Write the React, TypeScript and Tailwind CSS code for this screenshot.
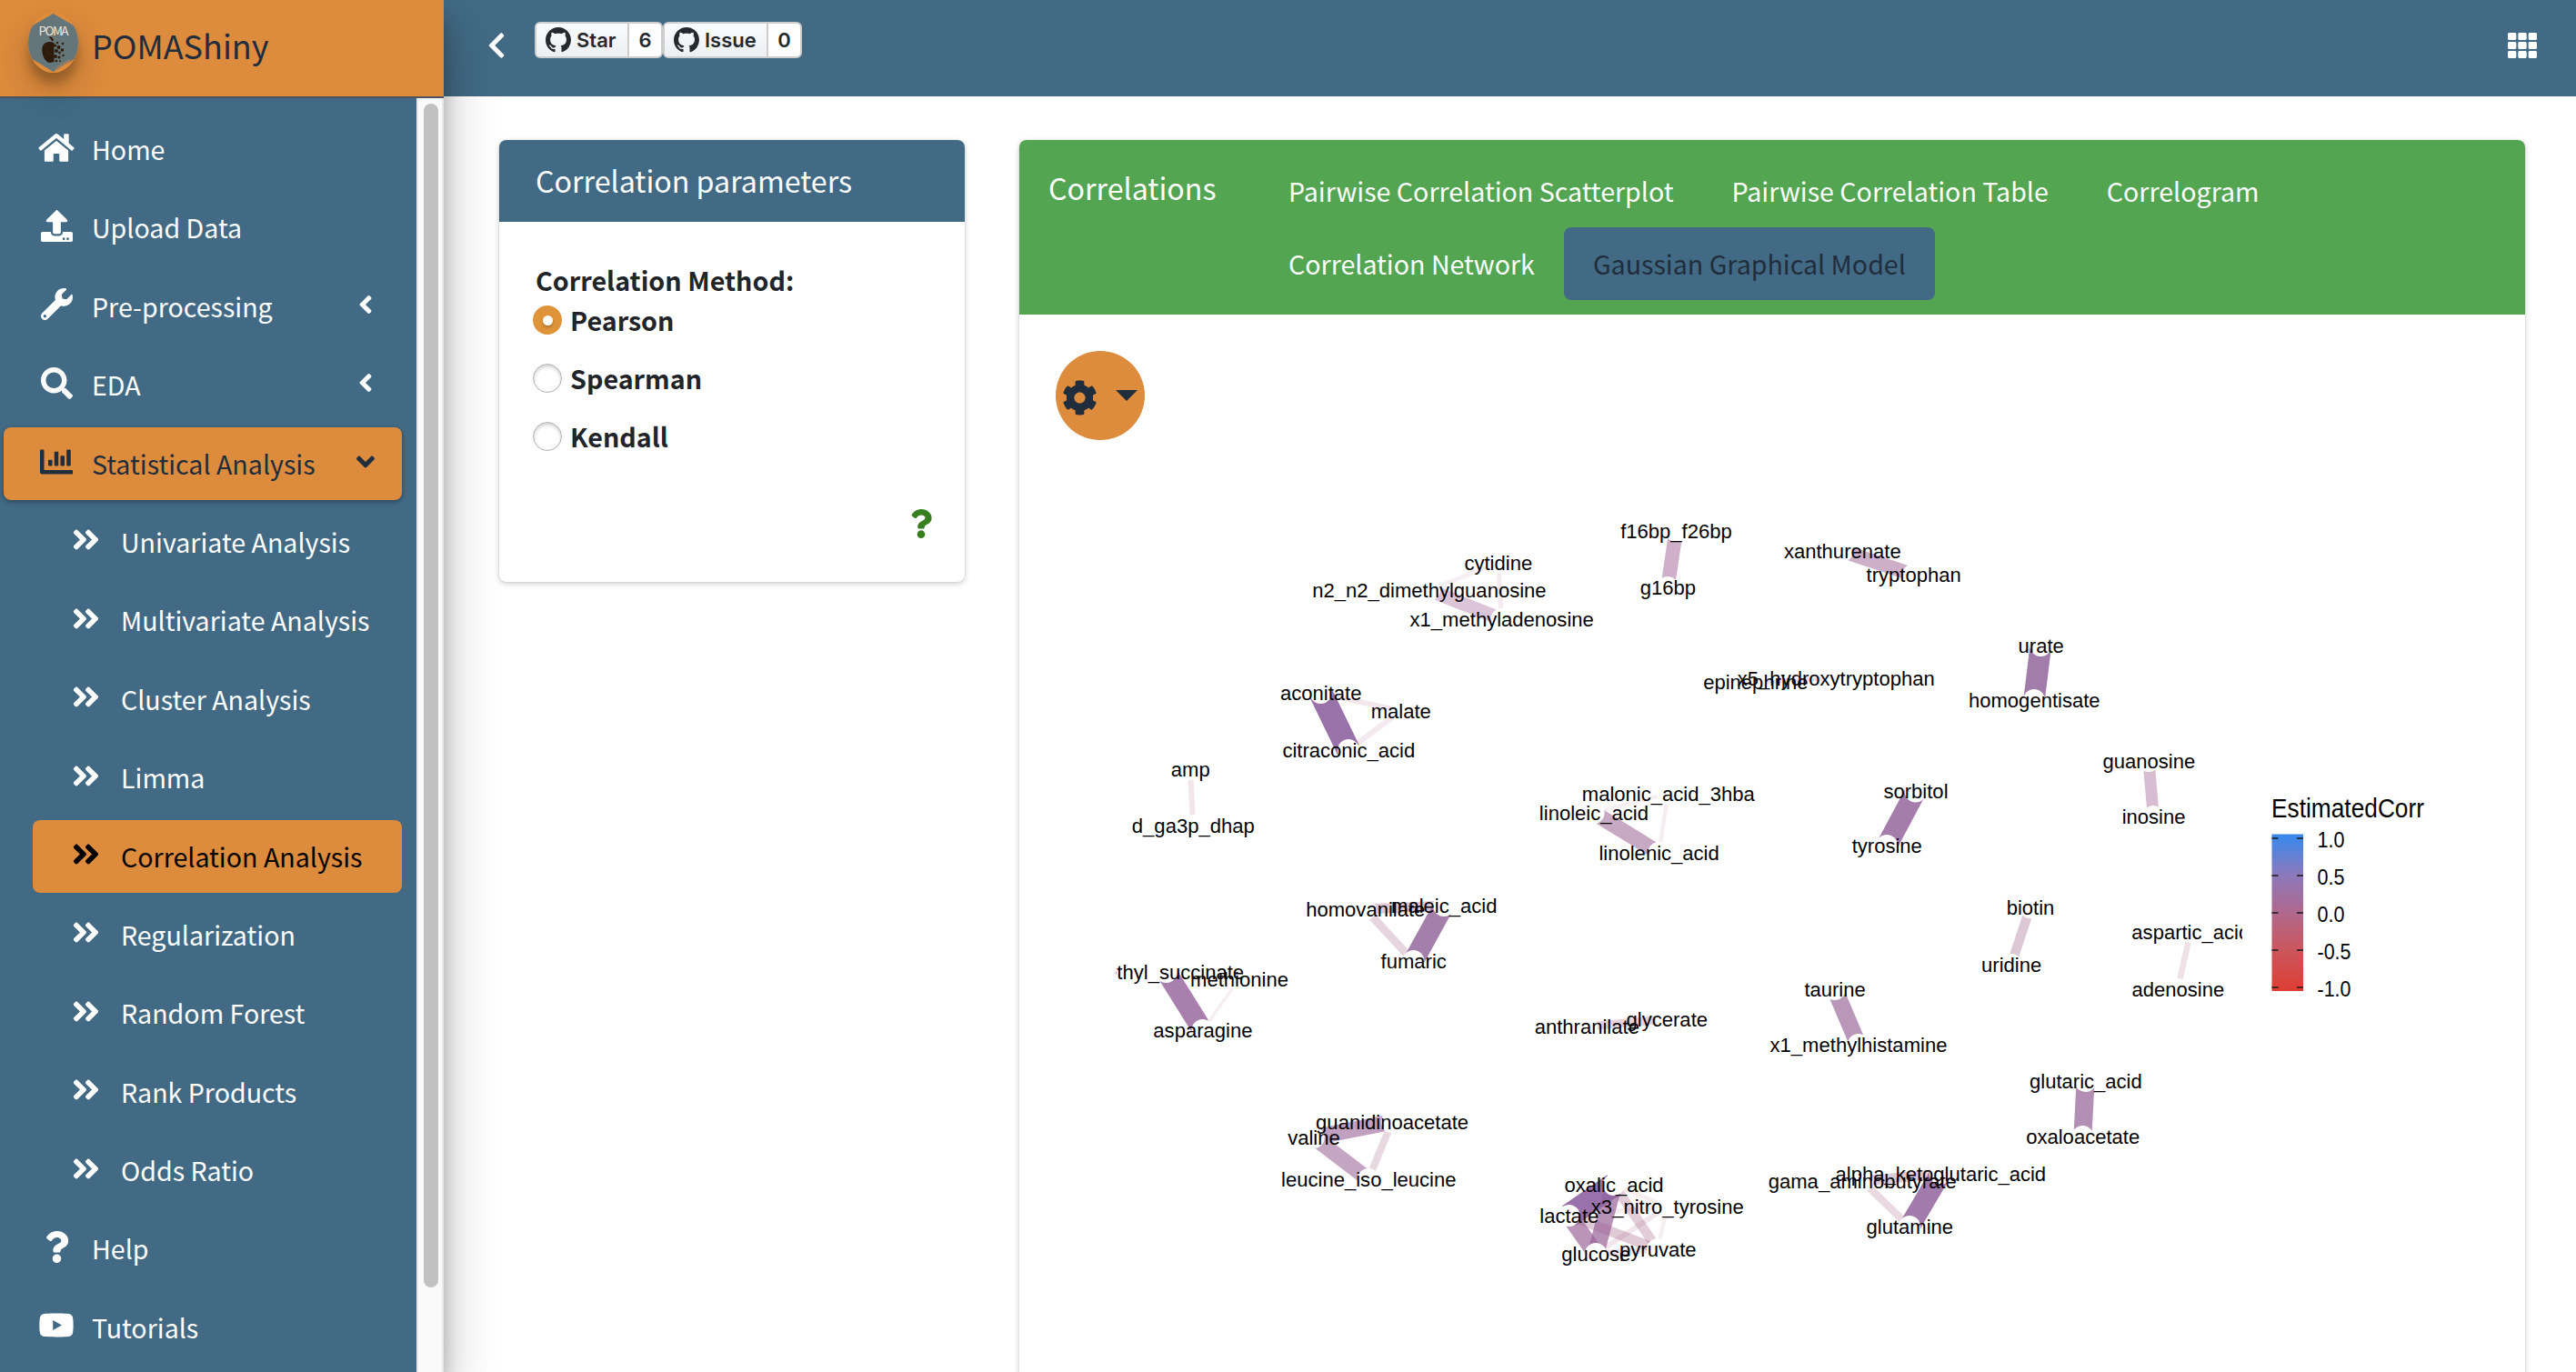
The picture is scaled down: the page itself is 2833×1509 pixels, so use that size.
import React from "react";
import {
  FaAngleDoubleRight,
  FaAngleDown,
  FaAngleLeft,
  FaChartBar,
  FaChevronLeft,
  FaCog,
  FaHome,
  FaQuestion,
  FaSearch,
  FaTh,
  FaUpload,
  FaWrench,
  FaYoutube,
} from "react-icons/fa";

type NavItem = { label: string; icon: React.ReactNode; chevron?: boolean };

const topItems: NavItem[] = [
  { label: "Home", icon: <FaHome className="h-[35px] w-[40px]" /> },
  { label: "Upload Data", icon: <FaUpload className="size-[35px]" /> },
  { label: "Pre-processing", icon: <FaWrench className="size-[35px]" />, chevron: true },
  { label: "EDA", icon: <FaSearch className="size-[35px]" />, chevron: true },
];

const subItems = [
  "Univariate Analysis",
  "Multivariate Analysis",
  "Cluster Analysis",
  "Limma",
  "Correlation Analysis",
  "Regularization",
  "Random Forest",
  "Rank Products",
  "Odds Ratio",
];

const bottomItems: NavItem[] = [
  { label: "Help", icon: <FaQuestion className="size-[35px]" /> },
  { label: "Tutorials", icon: <FaYoutube className="h-[35px] w-[40px]" /> },
];

function NavRow({ item, active = false }: { item: NavItem; active?: boolean }) {
  return (
    <div
      className={
        active
          ? "ml-1 mr-4 flex h-20 shrink-0 items-center rounded-lg bg-[#dd8b3c] pl-8 text-[#1f2d3d] shadow-[0_2px_6px_rgba(0,0,0,0.12),0_2px_4px_rgba(0,0,0,0.24)]"
          : "ml-1 mr-4 flex h-20 shrink-0 items-center pl-8 text-white"
      }
    >
      <span className="flex w-[52px] shrink-0 justify-center pb-1">{item.icon}</span>
      <span className="ml-[13px] grow">{item.label}</span>
      {item.chevron && <FaAngleLeft className="mr-[24px] size-8 -translate-y-[2px]" />}
      {active && <FaAngleDown className="mr-[24px] size-8 -translate-y-[2px]" />}
    </div>
  );
}

function Logo() {
  return (
    <div className="ml-[31px] h-[66px] w-[55px] rounded-[50%] shadow-[0_20px_40px_rgba(0,0,0,0.19),0_12px_12px_rgba(0,0,0,0.23)]">
      <svg viewBox="0 0 55 66" className="block h-[66px] w-[55px] overflow-hidden rounded-[50%]">
        <rect width="55" height="66" fill="#e08c3a" />
        <path d="M27.5 1 L57 18 V47 L27.5 65 L-2 47 V18 Z" fill="#64767a" />
        <path d="M29 63.5 L46 53 M31 60.5 L46 51.5" stroke="#b98250" strokeWidth="1" />
        <text x="28" y="25" textAnchor="middle" textLength="33" fontSize="13.5" fill="#efe3d6" fontFamily="Noto Sans CJK SC">
          POMA
        </text>
        <path
          d="M28.5 33 C24 31 16 31 15.3 40 C15 47 19 55 24 55 C26 55 27 54 28.5 54.5 Z M26 31 C25 29 23.5 28 22.5 26.5 C26 26 28.5 28 27.5 31 Z"
          fill="#2d1c0c"
        />
        <g fill="#2d1c0c">
          <circle cx="29.5" cy="36" r="1.6" />
          <circle cx="32" cy="33" r="1.2" />
          <circle cx="33.5" cy="38" r="2" />
          <circle cx="38" cy="34" r="1.2" />
          <circle cx="37.5" cy="41" r="1.8" />
          <circle cx="31" cy="42" r="2" />
          <circle cx="34.5" cy="44" r="1.4" />
          <circle cx="30" cy="48" r="2" />
          <circle cx="34" cy="49" r="1.6" />
          <circle cx="38.5" cy="47" r="1.2" />
          <circle cx="31" cy="53" r="1.3" />
          <circle cx="35" cy="53" r="0.9" />
        </g>
      </svg>
    </div>
  );
}

function Sidebar() {
  return (
    <aside className="relative z-10 flex h-[1509px] w-[488px] shrink-0 flex-col bg-[#426a84] shadow-[0_28px_56px_rgba(0,0,0,0.25),0_20px_20px_rgba(0,0,0,0.22)]">
      <div className="flex h-[108px] shrink-0 items-center border-b-2 border-[#4b545c] bg-[#dd8b3c] pb-[12px]">
        <Logo />
        <span className="ml-[15px] pt-[3px] text-[36px] leading-[48px] text-[#1f2d3d]">POMAShiny</span>
      </div>
      <div className="flex min-h-0 grow">
        <nav className="flex w-[458px] flex-col gap-[6.4px] overflow-hidden pt-4 text-[28.6px] leading-[48px]">
          {topItems.map((item) => (
            <NavRow key={item.label} item={item} />
          ))}
          <NavRow active item={{ label: "Statistical Analysis", icon: <FaChartBar className="size-[36px]" /> }} />
          {subItems.map((label) => (
            <div
              key={label}
              className={
                label === "Correlation Analysis"
                  ? "ml-9 mr-4 flex h-20 shrink-0 items-center rounded-lg bg-[#dd8b3c] pl-8 text-black"
                  : "ml-9 mr-4 flex h-20 shrink-0 items-center pl-8 text-white"
              }
            >
              <span className="flex w-[53px] shrink-0 justify-center pb-1">
                <FaAngleDoubleRight className="size-[35px]" />
              </span>
              <span className="ml-[12px] whitespace-nowrap">{label}</span>
            </div>
          ))}
          {bottomItems.map((item) => (
            <NavRow key={item.label} item={item} />
          ))}
        </nav>
        <div className="flex w-[30px] justify-center border-x-2 border-[#e8e8e8] bg-[#fafafa] pl-[2px] pt-[6px]">
          <div className="h-[1302px] w-4 rounded-full bg-[#c1c1c1]" />
        </div>
      </div>
    </aside>
  );
}

function GithubMark() {
  return (
    <svg viewBox="0 0 16 16" className="mr-[6px] size-[28px] shrink-0" fill="currentColor">
      <path
        fillRule="evenodd"
        d="M8 0C3.58 0 0 3.58 0 8c0 3.54 2.29 6.53 5.47 7.59.4.07.55-.17.55-.38 0-.19-.01-.82-.01-1.49-2.01.37-2.53-.49-2.69-.94-.09-.23-.48-.94-.82-1.13-.28-.15-.68-.52-.01-.53.63-.01 1.08.58 1.23.82.72 1.21 1.87.87 2.33.66.07-.52.28-.87.51-1.07-1.78-.2-3.64-.89-3.64-3.95 0-.87.31-1.59.82-2.15-.08-.2-.36-1.02.08-2.12 0 0 .67-.21 2.2.82.64-.18 1.32-.27 2-.27.68 0 1.36.09 2 .27 1.53-1.04 2.2-.82 2.2-.82.44 1.1.16 1.92.08 2.12.51.56.82 1.27.82 2.15 0 3.07-1.87 3.75-3.65 3.95.29.25.54.73.54 1.48 0 1.07-.01 1.93-.01 2.2 0 .21.15.46.55.38A8.013 8.013 0 0016 8c0-4.42-3.58-8-8-8z"
      />
    </svg>
  );
}

function GithubButton({ label, count }: { label: string; count: string }) {
  return (
    <div className="flex h-10 overflow-hidden rounded-[6px] border-2 border-[#cdcdcd] bg-white font-['Inter','Liberation_Sans',sans-serif] text-[22px] font-semibold leading-[36px] text-[#24292e]">
      <div className="flex items-center bg-linear-to-b from-[#fafbfc] to-[#eceff3] pl-[10px] pr-[12px]">
        <GithubMark />
        <span className={label === "Star" ? "w-[44px]" : "w-[56px]"}>{label}</span>
      </div>
      <div className="w-[37px] border-l-2 border-[#cdcdcd] text-center">{count}</div>
    </div>
  );
}

function Header() {
  return (
    <header className="flex h-[106px] shrink-0 items-start bg-[#426a84] text-white">
      <FaChevronLeft className="ml-[48px] mt-[34px] h-[32px] w-[20px]" />
      <div className="ml-[32px] mt-6 flex">
        <GithubButton label="Star" count="6" />
        <GithubButton label="Issue" count="0" />
      </div>
      <FaTh className="ml-auto mr-[43px] mt-[34px] size-8" />
    </header>
  );
}

function Radio({ label, checked = false }: { label: string; checked?: boolean }) {
  return (
    <div className="flex h-16 items-start">
      {checked ? (
        <span className="-ml-[3px] flex size-8 items-center justify-center rounded-full bg-[#e0943a]">
          <span className="size-[11px] rounded-full bg-white shadow-[0_2px_3px_rgba(0,0,0,0.25)]" />
        </span>
      ) : (
        <span className="-ml-[3px] size-8 rounded-full border border-[#b4b4b4] bg-white shadow-[inset_0_2px_4px_rgba(0,0,0,0.2)]" />
      )}
      <span className="ml-[9px] leading-[32px]">{label}</span>
    </div>
  );
}

function ParametersCard() {
  return (
    <section className="flex h-[486px] w-[512px] shrink-0 flex-col overflow-hidden rounded-lg bg-white shadow-[0_0_2px_rgba(0,0,0,0.125),0_2px_6px_rgba(0,0,0,0.2)]">
      <h3 className="h-[90px] bg-[#426a84] pl-10 pt-[20px] text-[32.2px] leading-[48px] text-white">
        Correlation parameters
      </h3>
      <div className="flex grow flex-col pl-10 pt-[40px] text-[28.7px] font-bold text-[#212529]">
        <div className="leading-[48px]">Correlation Method:</div>
        <div className="pt-1">
          <Radio label="Pearson" checked />
          <Radio label="Spearman" />
          <Radio label="Kendall" />
        </div>
        <FaQuestion className="ml-auto mr-[32px] mt-[32px] size-8 text-[#38801f]" />
      </div>
    </section>
  );
}

type Point = [number, number];

const nodes: Record<string, Point> = {
  f16bp_f26bp: [1843.2, 584],
  g16bp: [1834, 646],
  cytidine: [1647.5, 619],
  n2_n2_dimethylguanosine: [1571.6, 649],
  x1_methyladenosine: [1651.4, 681],
  aconitate: [1452.4, 762],
  malate: [1540.5, 782],
  citraconic_acid: [1483, 825],
  amp: [1309, 846],
  d_ga3p_dhap: [1312, 908],
  malonic_acid_3hba: [1834.5, 873],
  linoleic_acid: [1752.6, 894],
  linolenic_acid: [1824.3, 938],
  xanthurenate: [2026, 606],
  tryptophan: [2104.3, 632],
  epinephrine: [1930.5, 750.5],
  x5_hydroxytryptophan: [2019, 746],
  urate: [2244.4, 710],
  homogentisate: [2237, 770],
  guanosine: [2363, 837],
  inosine: [2368.3, 898],
  sorbitol: [2106.7, 870.6],
  tyrosine: [2075, 930],
  biotin: [2232.7, 998],
  uridine: [2211.9, 1061],
  aspartic_acid: [2409, 1025],
  adenosine: [2395, 1088],
  taurine: [2017.8, 1088],
  x1_methylhistamine: [2043.7, 1149],
  glutaric_acid: [2293.6, 1189],
  oxaloacetate: [2290.4, 1250],
  alpha_ketoglutaric_acid: [2134, 1291],
  gama_aminobutyrate: [2048, 1299],
  glutamine: [2100, 1349],
  homovanilate: [1501.5, 1000],
  maleic_acid: [1588, 996],
  fumaric: [1554.4, 1057],
  methyl_succinate: [1282.6, 1069],
  methionine: [1362.7, 1077],
  asparagine: [1322.6, 1133],
  anthranilate: [1745, 1129],
  glycerate: [1833, 1121],
  guanidinoacetate: [1530.8, 1234],
  valine: [1444.7, 1251],
  leucine_iso_leucine: [1505, 1297],
  oxalic_acid: [1774.8, 1303],
  x3_nitro_tyrosine: [1833.5, 1327],
  lactate: [1725.5, 1337],
  glucose: [1755, 1379],
  pyruvate: [1823, 1374],
};

// from, to, stroke width, colour, opacity
const edges: [string, string, number, string, number][] = [
  ["f16bp_f26bp", "g16bp", 15.5, "#cfafca", 1],
  ["cytidine", "n2_n2_dimethylguanosine", 5, "#f6eff3", 1],
  ["cytidine", "x1_methyladenosine", 5, "#f4ebf0", 1],
  ["n2_n2_dimethylguanosine", "x1_methyladenosine", 15, "#dcc5d8", 1],
  ["aconitate", "malate", 6, "#f3e7ec", 1],
  ["malate", "citraconic_acid", 6, "#f4e9ee", 1],
  ["aconitate", "citraconic_acid", 26, "#9a72aa", 1],
  ["amp", "d_ga3p_dhap", 6, "#f2e6eb", 1],
  ["malonic_acid_3hba", "linoleic_acid", 4, "#f6eff3", 1],
  ["malonic_acid_3hba", "linolenic_acid", 4.5, "#f5edf1", 1],
  ["linoleic_acid", "linolenic_acid", 17, "#c8a9c4", 1],
  ["xanthurenate", "tryptophan", 15.5, "#cdafc8", 1],
  ["epinephrine", "x5_hydroxytryptophan", 4, "#f0e0e6", 1],
  ["urate", "homogentisate", 23.5, "#a27cab", 1],
  ["guanosine", "inosine", 13, "#d6bdd1", 1],
  ["sorbitol", "tyrosine", 23, "#a47dab", 1],
  ["biotin", "uridine", 10.5, "#ddc8d8", 1],
  ["aspartic_acid", "adenosine", 6.5, "#f0e1e7", 1],
  ["taurine", "x1_methylhistamine", 18.5, "#b897b9", 1],
  ["glutaric_acid", "oxaloacetate", 20, "#b48fb5", 1],
  ["alpha_ketoglutaric_acid", "gama_aminobutyrate", 11, "#e2ccd7", 1],
  ["gama_aminobutyrate", "glutamine", 8, "#e9d9e1", 1],
  ["alpha_ketoglutaric_acid", "glutamine", 23, "#a27aab", 1],
  ["homovanilate", "maleic_acid", 11, "#dfc9d6", 1],
  ["homovanilate", "fumaric", 9, "#e6d5df", 1],
  ["maleic_acid", "fumaric", 22.5, "#a47fab", 1],
  ["methyl_succinate", "asparagine", 22.5, "#a87fad", 1],
  ["methionine", "asparagine", 3.5, "#f5eef2", 1],
  ["anthranilate", "glycerate", 9, "#e5d2dc", 1],
  ["valine", "guanidinoacetate", 17.5, "#c2a0bf", 1],
  ["valine", "leucine_iso_leucine", 17, "#c5a6c2", 1],
  ["guanidinoacetate", "leucine_iso_leucine", 8, "#e8d9e1", 1],
  ["oxalic_acid", "x3_nitro_tyrosine", 5, "#a6607f", 0.1],
  ["x3_nitro_tyrosine", "pyruvate", 4.5, "#a6607f", 0.1],
  ["x3_nitro_tyrosine", "lactate", 5, "#a6607f", 0.1],
  ["x3_nitro_tyrosine", "glucose", 6, "#a6607f", 0.15],
  ["glucose", "pyruvate", 7, "#a6607f", 0.18],
  ["oxalic_acid", "pyruvate", 10.5, "#a6688a", 0.33],
  ["lactate", "pyruvate", 11, "#a6688a", 0.35],
  ["oxalic_acid", "glucose", 18.5, "#9a6398", 0.7],
  ["lactate", "glucose", 18.5, "#9a6398", 0.68],
  ["oxalic_acid", "lactate", 26, "#8f63a2", 0.9],
];

const legendTicks: [string, number][] = [
  ["1.0", 922],
  ["0.5", 963],
  ["0.0", 1004],
  ["-0.5", 1045],
  ["-1.0", 1086],
];

function NetworkPlot() {
  return (
    <svg
      viewBox="1121 484 1656 1025"
      className="block h-[1025px] w-[1656px] shrink-0"
      fontFamily="Liberation Sans, Arial, sans-serif"
    >
      <defs>
        <clipPath id="panel">
          <rect x="1227" y="540" width="1239" height="900" />
        </clipPath>
        <linearGradient id="corr" x1="0" y1="0" x2="0" y2="1">
          <stop offset="0" stopColor="#3b88ea" />
          <stop offset="0.03" stopColor="#3f87e8" />
          <stop offset="0.26" stopColor="#8c79bb" />
          <stop offset="0.5" stopColor="#b0688d" />
          <stop offset="0.74" stopColor="#cb565d" />
          <stop offset="1" stopColor="#dd3e33" />
        </linearGradient>
      </defs>
      <g clipPath="url(#panel)">
        {edges.map(([from, to, width, color, opacity]) => (
          <line
            key={from + to}
            x1={nodes[from][0]}
            y1={nodes[from][1]}
            x2={nodes[to][0]}
            y2={nodes[to][1]}
            stroke={color}
            strokeWidth={width}
            strokeOpacity={opacity}
          />
        ))}
        {Object.entries(nodes).map(([name, [x, y]]) => (
          <circle key={name} cx={x} cy={y} r="12" fill="#fff" />
        ))}
        {Object.entries(nodes).map(([name, [x, y]]) => (
          <text key={name} x={x + 0.3} y={y + 7.8} textAnchor="middle" fontSize="22.05">
            {name}
          </text>
        ))}
      </g>
      <text x="2498" y="899" fontSize="30" textLength="168" lengthAdjust="spacingAndGlyphs">
        EstimatedCorr
      </text>
      <rect x="2498.5" y="917.5" width="34.5" height="172.5" fill="url(#corr)" />
      {legendTicks.map(([label, y]) => (
        <g key={label}>
          <path d={`M2498.5 ${y}h7M2526 ${y}h7`} stroke="#1a1a1a" strokeWidth="1.5" />
          <text
            x="2548.5"
            y={y + 9.7}
            fontSize="24"
            textLength={label.startsWith("-") ? 37 : 30}
            lengthAdjust="spacingAndGlyphs"
          >
            {label}
          </text>
        </g>
      ))}
    </svg>
  );
}

const tabs = [
  "Pairwise Correlation Scatterplot",
  "Pairwise Correlation Table",
  "Correlogram",
  "Correlation Network",
  "Gaussian Graphical Model",
];

function CorrelationsCard() {
  return (
    <section className="flex h-[1400px] w-[1656px] shrink-0 flex-col overflow-hidden rounded-t-lg bg-white shadow-[0_0_2px_rgba(0,0,0,0.125),0_2px_6px_rgba(0,0,0,0.2)]">
      <div className="flex h-[192px] shrink-0 bg-[#53a551] pt-4 text-white">
        <h3 className="w-[264px] shrink-0 pl-8 pt-[12px] text-[32.2px] leading-[48px]">Correlations</h3>
        <ul className="flex w-[1200px] flex-wrap content-start text-[28.6px] leading-[48px]">
          {tabs.map((tab) => (
            <li
              key={tab}
              className={
                tab === "Gaussian Graphical Model"
                  ? "h-20 rounded-lg bg-[#426a84] px-8 pt-4 text-[#1f2d3d]"
                  : "h-20 px-8 pt-4"
              }
            >
              {tab}
            </li>
          ))}
        </ul>
      </div>
      <button className="ml-10 mt-10 flex size-[98px] shrink-0 items-center rounded-full bg-[#dd8b3c] text-[#1f2d3d]">
        <FaCog className="ml-[7px] mt-[4px] size-[39px]" />
        <span className="ml-[20px] border-x-[12px] border-t-[12px] border-x-transparent border-t-[#1f2d3d]" />
      </button>
      <NetworkPlot />
    </section>
  );
}

export default function App() {
  return (
    <div className="flex h-[1509px] w-[2833px] overflow-hidden bg-white font-['Noto_Sans_CJK_SC',sans-serif]">
      <Sidebar />
      <div className="flex min-w-0 grow flex-col">
        <Header />
        <main className="flex items-start gap-[60px] pl-[61px] pt-12">
          <ParametersCard />
          <CorrelationsCard />
        </main>
      </div>
    </div>
  );
}
